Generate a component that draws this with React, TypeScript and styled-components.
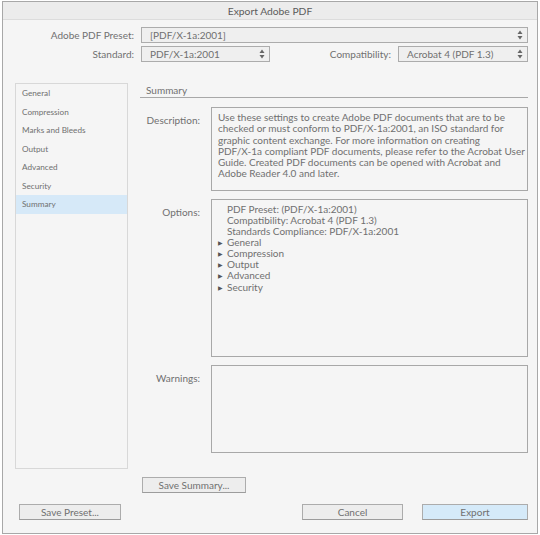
import React from 'react';
import styled, { createGlobalStyle } from 'styled-components';

const GlobalStyle = createGlobalStyle`
  html, body {
    margin: 0;
    padding: 0;
    background: #ffffff;
  }
  body {
    font-family: Lato, 'Liberation Sans', sans-serif;
    font-size: 10px;
    color: #707070;
  }
  * {
    box-sizing: border-box;
  }
`;

const Window = styled.div`
  margin: 1px 0 0 2px;
  width: 536px;
  height: 533px;
  border: 1px solid #a8a8a8;
  background: #f5f5f5;
  display: flex;
  flex-direction: column;
`;

const TitleBar = styled.div`
  height: 18px;
  background: #ececec;
  border-bottom: 1px solid #dcdcdc;
  display: flex;
  align-items: center;
  justify-content: center;
  font-size: 10.3px;
  color: #5c5c5c;
`;

const Body = styled.div`
  flex: 1;
  display: flex;
  flex-direction: column;
  padding: 7px 9px 0 12px;
`;

const TopRows = styled.div`
  display: flex;
  flex-direction: column;
  gap: 3px;
`;

const FieldRow = styled.div`
  display: flex;
  align-items: center;
`;

const FieldLabel = styled.div<{ $w: number }>`
  width: ${p => p.$w}px;
  text-align: right;
  padding-right: 7px;
  font-size: 10px;
  color: #707070;
  white-space: nowrap;
`;

const Select = styled.div<{ $w: number }>`
  width: ${p => p.$w}px;
  height: 16px;
  border: 1px solid #acacac;
  background: #efefef;
  display: flex;
  align-items: center;
  justify-content: space-between;
  padding: 0 4px 0 8px;
  font-size: 10px;
  color: #707070;
`;

const Spacer = styled.div`
  flex: 1;
`;

const Main = styled.div`
  display: flex;
  margin-top: 21px;
  gap: 12px;
`;

const Nav = styled.div`
  width: 114px;
  height: 386px;
  border: 1px solid #d8d8d8;
  display: flex;
  flex-direction: column;
`;

const NavItem = styled.div<{ $active?: boolean }>`
  height: 18.5px;
  display: flex;
  align-items: center;
  padding-left: 6px;
  font-size: 8.2px;
  color: #707070;
  background: ${p => (p.$active ? '#d6e9f8' : 'transparent')};
`;

const Content = styled.div`
  flex: 1;
  display: flex;
  flex-direction: column;
`;

const SectionTitle = styled.div`
  height: 15px;
  padding-left: 6px;
  border-bottom: 1px solid #a8a8a8;
  font-size: 10px;
  color: #707070;
  display: flex;
  align-items: center;
`;

const BoxRow = styled.div<{ $mt: number }>`
  display: flex;
  margin-top: ${p => p.$mt}px;
`;

const BoxLabel = styled.div`
  width: 60px;
  text-align: right;
  font-size: 10px;
  color: #707070;
  padding-top: 7px;
  margin-right: 11px;
`;

const TextBox = styled.div<{ $h: number }>`
  width: 317px;
  height: ${p => p.$h}px;
  border: 1px solid #a8a8a8;
  padding: 4px 0 4px 6px;
  font-size: 10px;
  line-height: 11.3px;
  color: #707070;
  white-space: nowrap;
`;

const OptionLine = styled.div<{ $tree?: boolean }>`
  display: flex;
  align-items: center;
  height: 11.1px;
  padding-left: ${p => (p.$tree ? '0' : '9px')};
`;

const Arrow = styled.span`
  display: inline-block;
  width: 9px;
  font-size: 6px;
  color: #555;
`;

const Button = styled.div<{ $w: number; $primary?: boolean }>`
  width: ${p => p.$w}px;
  height: 16px;
  border: 1px solid #acacac;
  border-bottom-color: #9c9c9c;
  background: ${p => (p.$primary ? '#d5eaf9' : '#ededed')};
  display: flex;
  align-items: center;
  justify-content: center;
  font-size: 10px;
  color: #707070;
`;

const SummaryBtnRow = styled.div`
  display: flex;
  margin: 8px 0 0 127px;
`;

const Footer = styled.div`
  display: flex;
  align-items: center;
  margin-top: 11px;
  padding-left: 4px;
`;

const ButtonGap = styled.div`
  width: 19px;
`;

const Stepper = () => (
  <svg width="6" height="10" viewBox="0 0 6 10">
    <path d="M3 0.5 L5.5 4 L0.5 4 Z" fill="#666" />
    <path d="M3 9.5 L5.5 6 L0.5 6 Z" fill="#666" />
  </svg>
);

const navItems = ['General', 'Compression', 'Marks and Bleeds', 'Output', 'Advanced', 'Security', 'Summary'];

const descLines = [
  'Use these settings to create Adobe PDF documents that are to be',
  'checked or must conform to PDF/X-1a:2001, an ISO standard for',
  'graphic content exchange.  For more information on creating',
  'PDF/X-1a compliant PDF documents, please refer to the Acrobat User',
  'Guide.  Created PDF documents can be opened with Acrobat and',
  'Adobe Reader 4.0 and later.',
];

const App: React.FC = () => {
  return (
    <>
      <GlobalStyle />
      <Window>
        <TitleBar>Export Adobe PDF</TitleBar>
        <Body>
          <TopRows>
            <FieldRow>
              <FieldLabel $w={126}>Adobe PDF Preset:</FieldLabel>
              <Select $w={387}>
                <span>[PDF/X-1a:2001]</span>
                <Stepper />
              </Select>
            </FieldRow>
            <FieldRow>
              <FieldLabel $w={126}>Standard:</FieldLabel>
              <Select $w={129}>
                <span>PDF/X-1a:2001</span>
                <Stepper />
              </Select>
              <Spacer />
              <FieldLabel $w={120}>Compatibility:</FieldLabel>
              <Select $w={130}>
                <span>Acrobat 4 (PDF 1.3)</span>
                <Stepper />
              </Select>
            </FieldRow>
          </TopRows>

          <Main>
            <Nav>
              {navItems.map(item => (
                <NavItem key={item} $active={item === 'Summary'}>
                  {item}
                </NavItem>
              ))}
            </Nav>
            <Content>
              <SectionTitle>Summary</SectionTitle>
              <BoxRow $mt={9}>
                <BoxLabel>Description:</BoxLabel>
                <TextBox $h={84}>
                  {descLines.map(l => (
                    <div key={l}>{l}</div>
                  ))}
                </TextBox>
              </BoxRow>
              <BoxRow $mt={8}>
                <BoxLabel>Options:</BoxLabel>
                <TextBox $h={158}>
                  <OptionLine>PDF Preset: (PDF/X-1a:2001)</OptionLine>
                  <OptionLine>Compatibility: Acrobat 4 (PDF 1.3)</OptionLine>
                  <OptionLine>Standards Compliance: PDF/X-1a:2001</OptionLine>
                  {['General', 'Compression', 'Output', 'Advanced', 'Security'].map(s => (
                    <OptionLine key={s} $tree>
                      <Arrow>▶</Arrow>
                      {s}
                    </OptionLine>
                  ))}
                </TextBox>
              </BoxRow>
              <BoxRow $mt={8}>
                <BoxLabel>Warnings:</BoxLabel>
                <TextBox $h={88} />
              </BoxRow>
            </Content>
          </Main>

          <SummaryBtnRow>
            <Button $w={104}>Save Summary...</Button>
          </SummaryBtnRow>

          <Footer>
            <Button $w={102}>Save Preset...</Button>
            <Spacer />
            <Button $w={101}>Cancel</Button>
            <ButtonGap />
            <Button $w={106} $primary>
              Export
            </Button>
          </Footer>
        </Body>
      </Window>
    </>
  );
};

export default App;
